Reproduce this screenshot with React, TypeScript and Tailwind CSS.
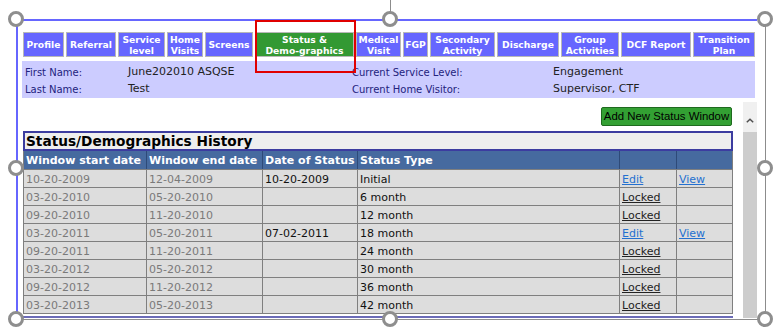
import React from "react";

type Tab = { w: number; lines: string[]; active?: boolean };

const tabs: Tab[] = [
  { w: 41, lines: ["Profile"] },
  { w: 50, lines: ["Referral"] },
  { w: 47, lines: ["Service", "level"] },
  { w: 36, lines: ["Home", "Visits"] },
  { w: 48, lines: ["Screens"] },
  { w: 99, lines: ["Status &", "Demo-graphics"], active: true },
  { w: 45, lines: ["Medical", "Visit"] },
  { w: 25, lines: ["FGP"] },
  { w: 65, lines: ["Secondary", "Activity"] },
  { w: 62, lines: ["Discharge"] },
  { w: 58, lines: ["Group", "Activities"] },
  { w: 70, lines: ["DCF Report"] },
  { w: 62, lines: ["Transition", "Plan"] },
];

const rows: string[][] = [
  ["10-20-2009", "12-04-2009", "10-20-2009", "Initial", "Edit", "View"],
  ["03-20-2010", "05-20-2010", "", "6 month", "Locked", ""],
  ["09-20-2010", "11-20-2010", "", "12 month", "Locked", ""],
  ["03-20-2011", "05-20-2011", "07-02-2011", "18 month", "Edit", "View"],
  ["09-20-2011", "11-20-2011", "", "24 month", "Locked", ""],
  ["03-20-2012", "05-20-2012", "", "30 month", "Locked", ""],
  ["09-20-2012", "11-20-2012", "", "36 month", "Locked", ""],
  ["03-20-2013", "05-20-2013", "", "42 month", "Locked", ""],
];

const colW = ["w-[123px]", "w-[116px]", "w-[95px]", "w-[262px]", "w-[57px]", "w-[57px]"];

const handles: [number, number][] = [
  [16, 19],
  [390, 19],
  [765, 19],
  [16, 168],
  [765, 168],
  [16, 319],
  [390, 319],
  [765, 319],
];

function Handle({ x, y }: { x: number; y: number }) {
  return (
    <div
      className="absolute w-[16px] h-[16px] rounded-full border-[3px] border-[#8e8e8e] bg-white"
      style={{ left: x - 8, top: y - 8 }}
    />
  );
}

export default function App() {
  return (
    <div className="relative w-[782px] h-[333px] overflow-hidden bg-white font-['DejaVu_Sans',sans-serif]">
      <div className="pl-[16px] pt-[19px]">
        <div className="w-[741px] h-[299px] overflow-hidden border-l-2 border-t-2 border-[#6666ff] flex flex-col">
          {/* Tabs */}
          <div className="mt-[11px] ml-[5px] flex gap-[2px] h-[25px]">
            {tabs.map((t, i) => (
              <div
                key={i}
                className={`${t.active ? "bg-[#339933]" : "bg-[#6666ff]"} h-[25px] shrink-0 border border-[#b8b8b8] flex flex-col items-center justify-center text-center text-white font-bold text-[9.2px] leading-[11px] whitespace-nowrap`}
                style={{ width: t.w }}
              >
                {t.lines.map((l, j) => (
                  <span key={j}>{l}</span>
                ))}
              </div>
            ))}
          </div>

          {/* Info band */}
          <div className="mt-[4px] ml-[4px] w-[733px] h-[37px] shrink-0 bg-[#ccccff] pt-[3px] pl-[3px]">
            <div className="grid grid-cols-[103px_224px_201px_1fr] h-[17px] items-center">
              <span className="text-[10px] text-[#23237d]">First Name:</span>
              <span className="text-[11px] text-[#222]">June202010 ASQSE</span>
              <span className="text-[10px] text-[#23237d]">Current Service Level:</span>
              <span className="text-[11px] text-[#222]">Engagement</span>
            </div>
            <div className="grid grid-cols-[103px_224px_201px_1fr] h-[17px] items-center">
              <span className="text-[10px] text-[#23237d]">Last Name:</span>
              <span className="text-[11px] text-[#222]">Test</span>
              <span className="text-[10px] text-[#23237d]">Current Home Visitor:</span>
              <span className="text-[11px] text-[#222]">Supervisor, CTF</span>
            </div>
          </div>

          {/* Scroll area */}
          <div className="mt-[4px] flex flex-1 min-h-0">
            <div className="w-[725px] flex flex-col">
              <div className="pt-[5px] pr-[11px] flex justify-end">
                <div className="w-[131px] h-[19px] rounded-[2px] border border-[#1f6a1f] bg-[#33a033] flex items-center justify-center font-['Liberation_Sans',sans-serif] text-[11.4px] text-black">
                  Add New Status Window
                </div>
              </div>

              <div className="mt-[5px] ml-[5px] w-[710px]">
                <div className="h-[20px] border-2 border-[#3c3ca0] bg-[#eeeeee] pl-[1px] pt-[1px] flex items-center font-bold text-[13.7px] text-black">
                  Status/Demographics History
                </div>
                <div className="border-l border-r border-[#7f7f7f]">
                  <div className="flex h-[19px] bg-[#466a9f] border-b border-[#7f7f7f] text-white font-bold text-[11px]">
                    {["Window start date", "Window end date", "Date of Status", "Status Type", "", ""].map(
                      (h, i) => (
                        <div
                          key={i}
                          className={`${colW[i]} shrink-0 ${i < 5 ? "border-r border-[#2e4a78]" : ""} pl-[2px] pt-[3px] flex items-center whitespace-nowrap overflow-hidden`}
                        >
                          {h}
                        </div>
                      )
                    )}
                  </div>
                  {rows.map((r, ri) => (
                    <div key={ri} className="flex h-[18px] bg-[#dddddd] border-b border-[#7f7f7f] text-[11px]">
                      {r.map((c, ci) => {
                        let cls = "text-[#111]";
                        if (ci < 2) cls = "text-[#7a7a7a]";
                        if (ci >= 4) {
                          cls =
                            c === "Locked"
                              ? "text-[#222] underline"
                              : "text-[#2470d0] underline";
                        }
                        return (
                          <div
                            key={ci}
                            className={`${colW[ci]} shrink-0 ${ci < 5 ? "border-r border-[#7f7f7f]" : ""} pl-[2px] pt-[3px] flex items-center whitespace-nowrap overflow-hidden`}
                          >
                            <span className={cls}>{c}</span>
                          </div>
                        );
                      })}
                    </div>
                  ))}
                </div>
              </div>
              <div className="mt-[2px] h-[2px] w-[715px] bg-[#6b6bb8]" />
            </div>

            {/* Scrollbar */}
            <div className="w-[14px] bg-[#f0f0f0] flex flex-col">
              <div className="h-[30px] flex items-start justify-center pt-[16px]">
                <svg width="8" height="5" viewBox="0 0 8 5">
                  <polyline points="0.8,4.3 4,1.2 7.2,4.3" fill="none" stroke="#505050" strokeWidth="1.5" />
                </svg>
              </div>
              <div className="flex-1 bg-[#cdcdcd]" />
            </div>
          </div>
        </div>
      </div>

      {/* Selection frame overlay */}
      <div className="absolute left-[16px] top-[19px] w-[750px] h-[301px] border-r border-b border-[#8c8c8c] pointer-events-none" />
      <div className="absolute left-[390px] top-0 w-px h-[19px] bg-[#8c8c8c]" />
      <div className="absolute left-[255px] top-[20px] w-[101px] h-[53px] border-2 border-[#e00000]" />
      {handles.map(([x, y], i) => (
        <Handle key={i} x={x} y={y} />
      ))}
    </div>
  );
}
